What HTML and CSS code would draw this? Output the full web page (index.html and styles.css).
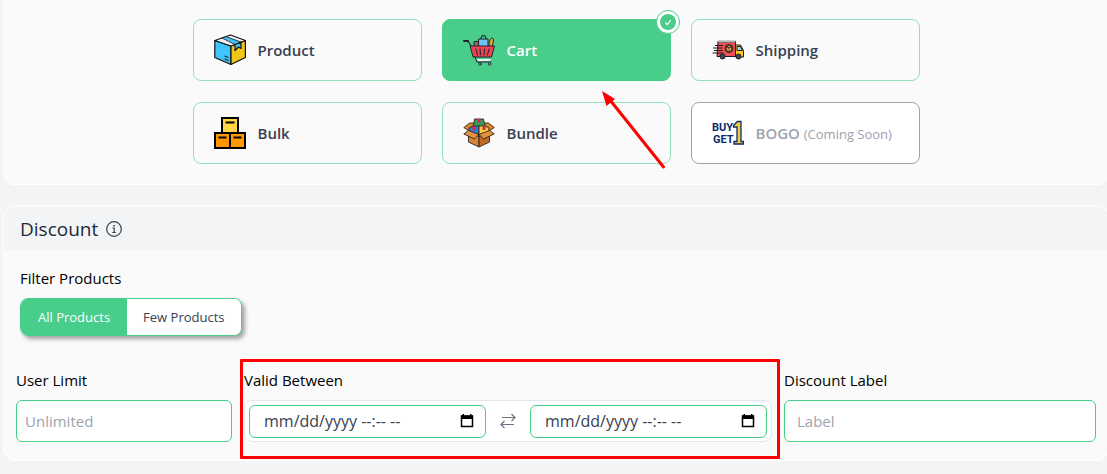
FILE: index.html
```
<!DOCTYPE html>
<html lang="en-US">
<head>
<meta charset="utf-8">
<title>Discount</title>
<link rel="stylesheet" href="styles.css">
</head>
<body>
<main class="page">
  <section class="panel panel-types" aria-label="Discount type">
    <div class="types">
      <button type="button" class="type">
        <svg class="type-icon" viewBox="0 0 32 32" aria-hidden="true" stroke="#111" stroke-width="1.200" stroke-linejoin="round">
          <path fill="#3fc5fb" d="M.8 6.500L17 12v18.500L.8 23.500z"/>
          <path fill="#f0c419" d="M17 12l14.400-5.500v17L17 30.500z"/>
          <path fill="#f4f4f6" d="M.8 6.500L16.500 1l14.900 5.500L17 12z"/>
          <path fill="#3fc5fb" stroke-width=".8" d="M8 4l4-1.400L27 8l-6 2.500z"/>
          <path fill="#3fc5fb" d="M21 10.500l6-2.300v6.300l-2.500-1.500-3.500 3.500z"/>
          <path fill="none" stroke-width="1" d="M10.500 22l4 1.500M10.500 25l4 1.500"/>
        </svg>
        <span class="type-name">Product</span>
      </button>
      <div class="type-slot">
        <button type="button" class="type type-active" aria-pressed="true">
          <svg class="type-icon" viewBox="0 0 32 32" aria-hidden="true" stroke="#1c2230" stroke-width="1" stroke-linejoin="round" stroke-linecap="round">
            <path fill="none" d="M18 6c0-6 5-6 5 0" stroke-width="1.200"/>
            <path fill="#a9673c" d="M11.500 7.500h5v5h-5z"/>
            <path fill="#6fc3f2" d="M16 5h9v8h-9z"/>
            <path fill="#e9a13c" d="M26 12c0-4 1-8 3-8s2 4 0 8z"/>
            <path fill="none" stroke-width="2" d="M1 7h4"/>
            <path fill="none" stroke-width="1.200" d="M5 7l3 5"/>
            <path fill="#f0434f" d="M7.500 12h24l-3 11h-18z"/>
            <path fill="none" d="M13 15l1.500 6M17 15l.5 6M21.500 15l-.5 6M26 15l-1.500 6"/>
            <path fill="none" d="M12 23l2 5h14"/>
            <path stroke="#e8eef2" stroke-width="1.800" d="M15 26h12"/>
            <circle cx="17" cy="30" r="1.200" fill="#ddd"/>
            <circle cx="26.500" cy="30" r="1.200" fill="#ddd"/>
          </svg>
          <span class="type-name">Cart</span>
        </button>
        <span class="badge">
          <svg class="badge-icon" viewBox="0 0 16 16" aria-hidden="true"><circle cx="8" cy="8" r="8" fill="#48cd8a"/><path d="M5.200 8.500l2 2 3.600-4.500" fill="none" stroke="#fff" stroke-width="1.200"/></svg>
        </span>
        <svg class="pointer" viewBox="0 0 66 80" aria-hidden="true"><path d="M62.500 77L9 10" stroke="#f00" stroke-width="3" stroke-linecap="round"/><path d="M1 1l13 8-8.500 7z" fill="#f00"/></svg>
      </div>
      <button type="button" class="type">
        <svg class="type-icon" viewBox="0 0 32 32" aria-hidden="true" stroke="#1c1c22" stroke-width="1" stroke-linejoin="round">
          <path fill="#f04e59" d="M6 7.500h17.500v15H5z"/>
          <path fill="#ddd" d="M6 7h17.500v1.500H6z" stroke-width=".4"/>
          <path fill="#ffc824" d="M23.500 11h5l3 5.500v6.500h-8z"/>
          <path fill="#9bd8f5" d="M25 12.500h3.500l2 4H25z"/>
          <circle cx="17" cy="14.500" r="4" fill="#7a4426" stroke-width=".8"/>
          <path fill="#f0a340" stroke-width=".5" d="M14.500 13l2.500-1.400 2.500 1.400v3.200L17 17.600l-2.500-1.400zM14.500 13l2.500 1.200 2.500-1.200M17 14.200v3.400"/>
          <path fill="none" d="M3 11.500h8M1 14h9.500M2 16.500h9M.5 19h11"/>
          <circle cx="10.500" cy="22.500" r="2.500" fill="#3b4658"/>
          <circle cx="26.500" cy="22.500" r="2.500" fill="#3b4658"/>
        </svg>
        <span class="type-name">Shipping</span>
      </button>
      <button type="button" class="type">
        <svg class="type-icon" viewBox="0 0 32 32" aria-hidden="true" stroke="#000" stroke-width="2">
          <path fill="#ffd54a" d="M8 1h16v15H8z"/>
          <path fill="#ff9800" d="M1 16h15v15H1zM16 16h15v15H16z"/>
          <path d="M11.500 5.500h9M4.500 20.500h8M19.500 20.500h8"/>
        </svg>
        <span class="type-name">Bulk</span>
      </button>
      <button type="button" class="type">
        <svg class="type-icon" viewBox="0 0 32 32" aria-hidden="true" stroke="#33221a" stroke-width=".9" stroke-linejoin="round">
          <path fill="#d98736" d="M.8 10.500l6-4.500h18.500l6 4.500L26 14H6z"/>
          <path fill="#2e7fd0" d="M6 11l5-2.500h5V20L6 15z"/>
          <path fill="#f6cf45" d="M26 11l-5-2.500h-5V20l10-5z"/>
          <path fill="#2fa35c" d="M11.500 2h9l1.500 7H10.500z"/>
          <path fill="#e0263c" stroke="none" d="M14.500 2h3v3.500h-3zM9.500 9.500h3V13h-3zM19.500 9.500h3V13h-3z"/>
          <path fill="#d98736" d="M5.500 15L16 19.500V30L5.500 25z"/>
          <path fill="#bd6b26" d="M26.500 15L16 19.500V30l10.500-5z"/>
          <path fill="#e2933f" d="M5.500 13.500L16 17.500l-4.500 4.500L.8 17zM26.500 13.500L16 17.500l4.500 4.500 10.700-5z"/>
        </svg>
        <span class="type-name">Bundle</span>
      </button>
      <button type="button" class="type type-disabled" disabled>
        <svg class="type-icon" viewBox="0 0 32 32" aria-hidden="true">
          <g class="bogo-text" fill="#0b2a6b"><text x="0" y="14">BUY</text><text x="1" y="26">GET</text></g>
          <path d="M21.500 8.500l4-4H29v20h2.500V27H22v-2.500h3V10h-3.500z" fill="#fbc93c" stroke="#0b2a6b" stroke-width="1.300"/>
        </svg>
        <span class="type-name">BOGO <small class="soon">(Coming Soon)</small></span>
      </button>
    </div>
  </section>

  <section class="panel">
    <header class="panel-head">
      <h2 class="panel-title">Discount</h2>
      <svg class="info-icon" viewBox="0 0 16 16" aria-hidden="true" fill="none" stroke="#374151" stroke-width="1.200"><circle cx="8" cy="8" r="7.300"/><path d="M6.500 7h1.700v4.500M6.300 11.500h3.500"/><path d="M7.300 4.700h1.500" stroke-width="1.400"/></svg>
    </header>
    <div class="panel-body">
      <div class="filter">
        <span class="label" id="filter-label">Filter Products</span>
        <div class="toggle" role="group" aria-labelledby="filter-label">
          <button type="button" class="toggle-option toggle-on" aria-pressed="true">All Products</button>
          <button type="button" class="toggle-option" aria-pressed="false">Few Products</button>
        </div>
      </div>
      <div class="fields">
        <div class="field">
          <label class="label" for="limit">User Limit</label>
          <input class="input" id="limit" type="text" placeholder="Unlimited">
        </div>
        <div class="field field-marked">
          <label class="label" for="start">Valid Between</label>
          <div class="range">
            <div class="date">
              <input class="date-input" id="start" type="text" placeholder="mm/dd/yyyy --:-- --">
              <button type="button" class="date-button" aria-label="Pick start date">
                <svg class="date-icon" viewBox="0 0 14 14" aria-hidden="true"><path d="M1.500 2h11v10.500h-11z" fill="none" stroke="#000" stroke-width="1.500"/><path d="M1 1.500h12V5H1zM2.500 0H4v2H2.500zM10 0h1.500v2H10z"/></svg>
              </button>
            </div>
            <svg class="swap-icon" viewBox="0 0 16 16" aria-hidden="true" fill="none" stroke="#6b7280" stroke-width="1.200"><path d="M2 4.500h13M11.500 1L15 4.500 11.500 8M14 11.500H1M4.500 8L1 11.500 4.500 15"/></svg>
            <div class="date">
              <input class="date-input" id="end" type="text" placeholder="mm/dd/yyyy --:-- --" aria-label="Valid until">
              <button type="button" class="date-button" aria-label="Pick end date">
                <svg class="date-icon" viewBox="0 0 14 14" aria-hidden="true"><path d="M1.500 2h11v10.500h-11z" fill="none" stroke="#000" stroke-width="1.500"/><path d="M1 1.500h12V5H1zM2.500 0H4v2H2.500zM10 0h1.500v2H10z"/></svg>
              </button>
            </div>
          </div>
        </div>
        <div class="field">
          <label class="label" for="label">Discount Label</label>
          <input class="input input-wide" id="label" type="text" placeholder="Label">
        </div>
      </div>
    </div>
  </section>
</main>
</body>
</html>
```
FILE: styles.css
```
* {
  box-sizing: border-box;
}

body {
  margin: 0;
  background: #f3f4f6;
  color: #000;
  font-family: "Open Sans", "Noto Sans", sans-serif;
  font-size: 15px;
  line-height: 24px;
  overflow: hidden;
}

button,
input {
  font: inherit;
}

.page {
  display: flex;
  flex-direction: column;
  gap: 20px;
  padding-left: 3px;
  margin-right: -2px;
}

.panel {
  background: #fafafa;
  border: 1px solid #fff;
  border-radius: 12px;
  overflow: hidden;
}

.panel-types {
  padding: 19px 0 20px;
  border-top: 0;
  border-top-left-radius: 0;
  border-top-right-radius: 0;
}

.types {
  display: grid;
  grid-template-columns: repeat(3, 1fr);
  gap: 21px 20px;
  max-width: 727px;
  margin: 0 auto;
}

.type-slot {
  display: grid;
  position: relative;
}

.type {
  display: flex;
  align-items: center;
  gap: 12px;
  padding: 14px 20px;
  border: 1px solid #93e0b9;
  border-radius: 8px;
  background: #fafafa;
  color: #374151;
  font-weight: 600;
  text-align: left;
}

.type-active {
  background: #48cd8a;
  border-color: #48cd8a;
  color: #fff;
}

.type-disabled {
  background: #fff;
  border-color: #9ca3af;
  color: #9ca3af;
}

.type-icon {
  width: 32px;
  height: 32px;
  flex: none;
}

.bogo-text {
  font: bold 11px Roboto, sans-serif;
}

.type-name {
  white-space: nowrap;
}

.soon {
  font-size: 13px;
  font-weight: 400;
}

.badge {
  position: absolute;
  top: -9px;
  right: -9px;
  display: flex;
  padding: 3px;
  border: 1px solid #48cd8a;
  border-radius: 50%;
  background: #fff;
}

.badge-icon {
  width: 16px;
  height: 16px;
}

.pointer {
  position: absolute;
  z-index: 1;
  top: 71px;
  left: 159px;
  width: 66px;
  height: 80px;
  fill: none;
}

.panel-head {
  display: flex;
  align-items: center;
  gap: 8px;
  padding: 11px 16px 9px;
  background: #f3f4f6;
}

.panel-title {
  margin: 0;
  color: #1f2937;
  font-size: 19px;
  font-weight: 400;
}

.info-icon {
  width: 16px;
  height: 16px;
}

.panel-body {
  display: flex;
  flex-direction: column;
  gap: 33px;
  padding: 17px 12px 18px;
}

.label {
  line-height: 22px;
}

.filter {
  display: flex;
  flex-direction: column;
  align-items: flex-start;
  gap: 9px;
  padding: 0 4px;
}

.toggle {
  display: flex;
  border: 1px solid #48cd8a;
  border-radius: 8px;
  background: #fff;
  box-shadow: 3px 3px 4px rgba(0, 0, 0, 0.35);
  overflow: hidden;
}

.toggle-option {
  padding: 6px 16px;
  border: 0;
  background: #fff;
  color: #374151;
  font-size: 13px;
}

.toggle-on {
  padding: 6px 17px;
  background: #48cd8a;
  color: #fff;
}

.fields {
  display: grid;
  grid-template-columns: 9fr 22fr 13fr;
  gap: 12px;
}

.field {
  display: flex;
  flex-direction: column;
  gap: 9px;
  min-width: 0;
}

.field-marked {
  position: relative;
}

.field-marked::after {
  content: "";
  position: absolute;
  inset: -10px -8px -17px -4px;
  border: 3px solid #f00;
  border-radius: 1px;
  pointer-events: none;
}

.input {
  width: 100%;
  height: 42px;
  padding: 0 8px;
  border: 1px solid #48cd8a;
  border-radius: 6px;
  background: #fff;
}

.input-wide {
  padding: 0 12px;
}

.input::placeholder {
  color: #9ca3af;
}

.range {
  display: flex;
  align-items: center;
  gap: 14px;
  height: 42px;
  padding: 0 4px;
  border: 1px solid #e5e7eb;
  border-radius: 8px;
  background: #fff;
}

.date {
  display: flex;
  flex: 1;
  align-items: center;
  min-width: 0;
  height: 33px;
  padding: 0 11px 0 14px;
  border: 1px solid #48cd8a;
  border-radius: 6px;
  background: #fff;
}

.date-input {
  flex: 1;
  min-width: 0;
  padding: 0;
  border: 0;
  background: none;
  color: #374151;
  font-size: 16px;
}

.date-input::placeholder {
  color: #374151;
}

.date-button {
  display: flex;
  padding: 0;
  border: 0;
  background: none;
}

.date-icon {
  width: 14px;
  height: 14px;
}

.swap-icon {
  width: 16px;
  height: 16px;
  flex: none;
}
```
